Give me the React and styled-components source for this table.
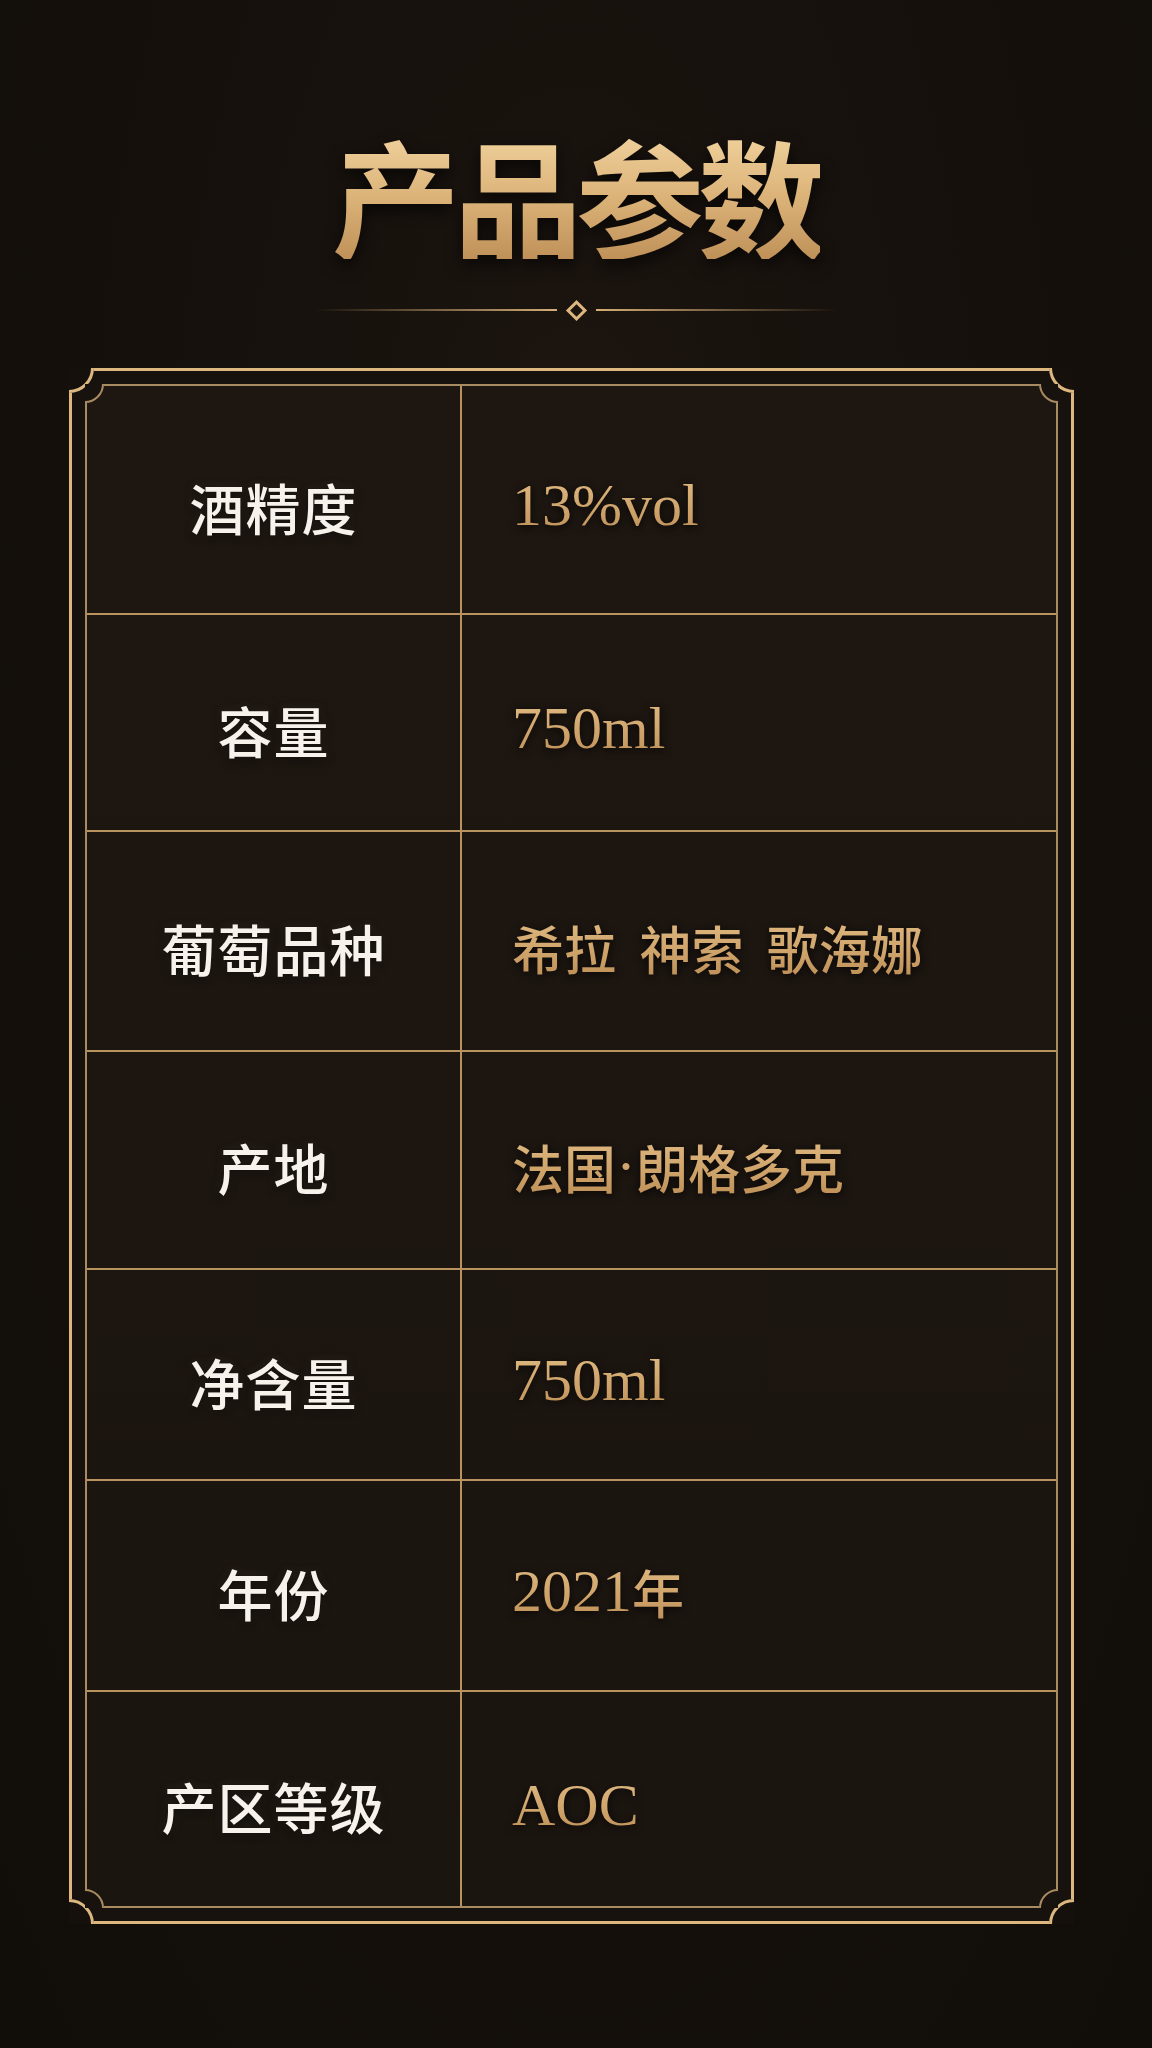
import styled, { createGlobalStyle } from "styled-components"

const GlobalStyle = createGlobalStyle`
    body {
        margin: 0;
        background: #14100b;
    }
`

const Page = styled.div`
    width: 1152px;
    min-height: 2048px;
    box-sizing: border-box;
    padding-top: 131px;
    display: flex;
    flex-direction: column;
    align-items: center;
    background: radial-gradient(ellipse at 50% 30%, #1c1510 0%, #15100c 55%, #110d09 100%);
    font-family: "Liberation Serif", "Noto Sans CJK SC", serif;
`

const Title = styled.h1`
    margin: 0;
    font-family: "Noto Sans CJK SC", sans-serif;
    font-size: 128px;
    font-weight: 700;
    line-height: 1;
    letter-spacing: -6px;
    background: linear-gradient(180deg, #f1d29e 0%, #dcb47a 50%, #bf9159 100%);
    -webkit-background-clip: text;
    background-clip: text;
    color: transparent;
    filter: drop-shadow(0 6px 8px rgba(0, 0, 0, 0.7));
`

const Divider = styled.div`
    margin-top: 40px;
    width: 522px;
    height: 22px;
    display: flex;
    align-items: center;
`

const Line = styled.div`
    flex: 1;
    height: 2px;
    background: linear-gradient(${p => (p.$right ? "to left" : "to right")}, rgba(214, 174, 118, 0) 0%, #d6ae76 100%);
`

const Diamond = styled.div`
    width: 9px;
    height: 9px;
    border: 3px solid #dcb67e;
    transform: rotate(45deg);
    margin: 0 12px;
`

const Frame = styled.div`
    position: relative;
    margin-top: 47px;
    margin-right: 9px;
    width: 1005px;
    box-sizing: border-box;
    border: 3px solid #dcb77f;
    padding: 13px;
    background: #17120d;
`

const Inner = styled.div`
    position: relative;
    border: 2px solid #a98b62;
    background: linear-gradient(180deg, #1d1611 0%, #1b1510 100%);
    display: flex;
    flex-direction: column;
`

const CornerSvg = styled.svg`
    position: absolute;
    ${p => (p.$pos.includes("t") ? "top" : "bottom")}: -${p => p.$bw}px;
    ${p => (p.$pos.includes("l") ? "left" : "right")}: -${p => p.$bw}px;
    transform: scale(${p => (p.$pos.includes("r") ? -1 : 1)}, ${p => (p.$pos.includes("b") ? -1 : 1)});
    overflow: visible;
`

const Corner = ({ pos, r, bw, color, fill }) => {
    const s = r + bw
    const m = r + bw / 2
    return (
        <CornerSvg $pos={pos} $bw={bw} width={s} height={s} viewBox={`0 0 ${s} ${s}`}>
            <path d={`M0 0 L${s} 0 A${s} ${s} 0 0 1 0 ${s} Z`} fill={fill} />
            <path d={`M${m} 0 A${m} ${m} 0 0 1 0 ${m}`} fill="none" stroke={color} strokeWidth={bw} />
        </CornerSvg>
    )
}

const Row = styled.div`
    height: ${p => p.$h}px;
    box-sizing: border-box;
    display: flex;
    border-bottom: ${p => (p.$last ? "none" : "2px solid #b8925f")};
`

const Label = styled.div`
    width: 375px;
    flex-shrink: 0;
    border-right: 2px solid #b8925f;
    display: flex;
    align-items: center;
    justify-content: center;
    padding-top: 12px;
    box-sizing: border-box;
    font-family: "Noto Sans CJK SC", sans-serif;
    font-size: 55px;
    font-weight: 500;
    letter-spacing: 1px;
    color: #f7f2eb;
    text-shadow: 0 2px 8px rgba(0, 0, 0, 0.9), 0 0 10px rgba(255, 230, 200, 0.15);
`

const Value = styled.div`
    flex: 1;
    display: flex;
    align-items: center;
    padding-left: 50px;
    padding-top: 12px;
    white-space: pre;
`

const ValueText = styled.span`
    font-family: ${p => (p.$latin ? '"Liberation Serif", "Noto Sans CJK SC", serif' : '"Noto Sans CJK SC", sans-serif')};
    font-size: ${p => (p.$latin ? 60 : 52)}px;
    font-weight: 500;
    background: linear-gradient(180deg, #e2bd86 0%, #cfa46b 55%, #b98a52 100%);
    -webkit-background-clip: text;
    background-clip: text;
    color: transparent;
    filter: drop-shadow(0 2px 4px rgba(0, 0, 0, 0.8));
`

const rows = [
    { label: "酒精度", value: [["13%vol", true]], h: 229 },
    { label: "容量", value: [["750ml", true]], h: 217 },
    { label: "葡萄品种", value: [["希拉  神索  歌海娜", false]], h: 220 },
    { label: "产地", value: [["法国", false], ["·", true], ["朗格多克", false]], h: 218 },
    { label: "净含量", value: [["750ml", true]], h: 211 },
    { label: "年份", value: [["2021", true], ["年", false]], h: 211 },
    { label: "产区等级", value: [["AOC", true]], h: 214 },
]

const App = () => {
    return (
        <Page>
            <GlobalStyle />
            <Title>产品参数</Title>
            <Divider>
                <Line />
                <Diamond />
                <Line $right />
            </Divider>
            <Frame>
                <Corner pos="tl" r={22} bw={3} color="#dcb77f" fill="#15100c" />
                <Corner pos="tr" r={22} bw={3} color="#dcb77f" fill="#15100c" />
                <Corner pos="bl" r={22} bw={3} color="#dcb77f" fill="#15100c" />
                <Corner pos="br" r={22} bw={3} color="#dcb77f" fill="#15100c" />
                <Inner>
                    <Corner pos="tl" r={17} bw={2} color="#a98b62" fill="#17120d" />
                    <Corner pos="tr" r={17} bw={2} color="#a98b62" fill="#17120d" />
                    <Corner pos="bl" r={17} bw={2} color="#a98b62" fill="#17120d" />
                    <Corner pos="br" r={17} bw={2} color="#a98b62" fill="#17120d" />
                    {rows.map((row, index) => (
                        <Row key={index} $h={row.h} $last={index === rows.length - 1}>
                            <Label>{row.label}</Label>
                            <Value>
                                {row.value.map(([text, latin], i) => (
                                    <ValueText key={i} $latin={latin}>{text}</ValueText>
                                ))}
                            </Value>
                        </Row>
                    ))}
                </Inner>
            </Frame>
        </Page>
    )
}

export default App
